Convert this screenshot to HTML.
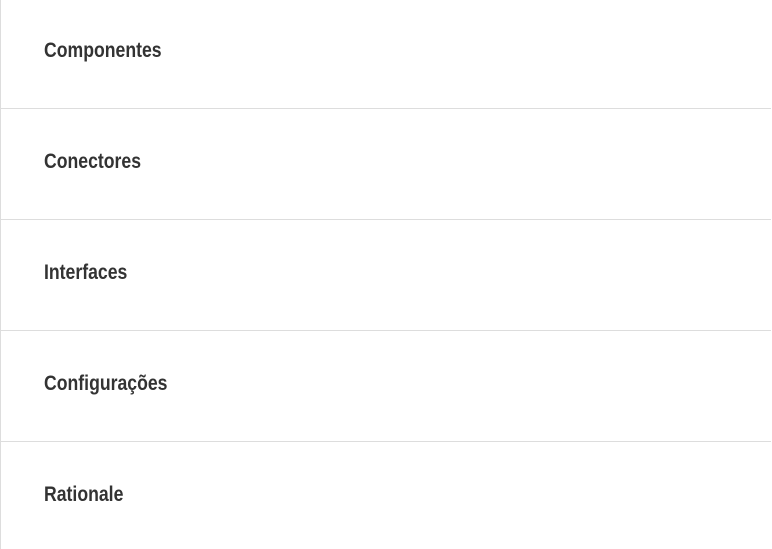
<!DOCTYPE html>
<html><head><style>
html,body{margin:0;padding:0;background:#fff;width:772px;height:549px;overflow:hidden}
.wrap{margin-top:-2px;border-left:1px solid #ddd;width:770px}
.row{height:110px;border-bottom:1px solid #ddd;position:relative}
.row span{position:absolute;left:43px;top:41px;font-family:"Liberation Sans",sans-serif;font-weight:bold;font-size:21px;color:#333;transform:scale(0.84,1.02);transform-origin:left center;white-space:nowrap}
</style></head><body>
<div class="wrap">
<div class="row"><span>Componentes</span></div>
<div class="row"><span>Conectores</span></div>
<div class="row"><span>Interfaces</span></div>
<div class="row"><span>Configurações</span></div>
<div class="row" style="border-bottom:none"><span>Rationale</span></div>
</div>
</body></html>
